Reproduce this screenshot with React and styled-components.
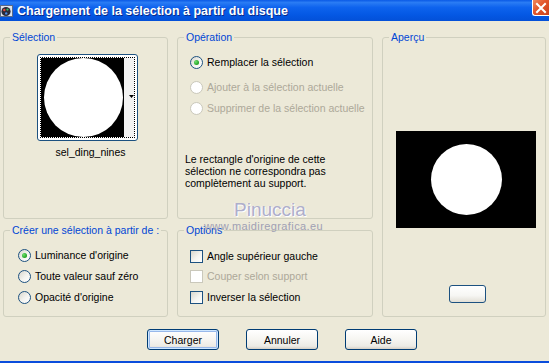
import React from "react";
import styled, { createGlobalStyle } from "styled-components";

const Global = createGlobalStyle`
  html, body { margin: 0; padding: 0; background: #ece9d8; }
  body { font-family: "Liberation Sans", Arial, sans-serif; font-size: 10.5px; color: #000; }
  * { box-sizing: border-box; }
`;

const Window = styled.div`
  position: relative;
  width: 549px;
  height: 363px;
  background: #ece9d8;
  border-bottom: 2px solid #0a4ddc;
  overflow: hidden;
  display: flex;
  flex-direction: column;
`;

const TitleBar = styled.div`
  height: 21px;
  flex: none;
  display: flex;
  align-items: center;
  background: linear-gradient(180deg, #0a5ae6 0%, #2a7cf4 12%, #0e63ee 35%, #0458e4 70%, #0350d8 100%);
`;

const AppIcon = styled.svg`
  width: 14px;
  height: 14px;
  margin: 0 3px 0 0;
  flex: none;
`;

const Title = styled.div`
  flex: 1;
  color: #fff;
  font-family: "Liberation Sans", Arial, sans-serif;
  font-weight: bold;
  font-size: 12.5px;
  text-shadow: 1px 1px 0 #0a2a8a;
  white-space: nowrap;
`;

const CloseBox = styled.div`
  align-self: flex-start;
  width: 17px;
  height: 17px;
  margin-top: -1px;
  border: 1px solid #fff;
  border-right: none;
  border-radius: 0 0 0 3px;
  background: linear-gradient(135deg, #f08a60 0%, #e2552a 45%, #c8401c 100%);
  display: flex;
  align-items: center;
  justify-content: center;
`;

const Body = styled.div`
  flex: 1;
  display: flex;
  flex-direction: column;
  padding: 10px 0 0 3px;
`;

const Groups = styled.div`
  display: grid;
  grid-template-columns: 165px 196px 164px;
  grid-template-rows: 188px 93px;
  column-gap: 9px;
  row-gap: 5px;
`;

const Group = styled.fieldset`
  margin: 0;
  padding: 0;
  min-width: 0;
  border: 1px solid #d0d0bf;
  border-radius: 3px;
  grid-column: ${(p) => p.$col};
  grid-row: ${(p) => p.$row};
  display: flex;
  flex-direction: column;
`;

const Legend = styled.legend`
  margin-left: 6px;
  padding: 0 2px;
  color: #0046d5;
  font-size: 10.5px;
  line-height: 13px;
  white-space: nowrap;
`;

const ThumbWrap = styled.div`
  display: flex;
  flex-direction: column;
  align-items: center;
  margin: 10px 0 0 33px;
  width: 101px;
`;

const ThumbButton = styled.div`
  width: 101px;
  height: 87px;
  border: 1px solid #1c5180;
  border-radius: 3px;
  background: #fff;
  padding: 2px;
`;

const FocusRect = styled.div`
  width: 100%;
  height: 100%;
  border: 1px dotted #000;
  display: flex;
`;

const ThumbLabel = styled.div`
  margin-top: 5px;
  padding-left: 6px;
  line-height: 13px;
  white-space: nowrap;
`;

const OptionList = styled.div`
  display: flex;
  flex-direction: column;
  padding: ${(p) => p.$pad};
`;

const Row = styled.label`
  display: flex;
  align-items: center;
  gap: 4px;
  height: 13px;
  line-height: 13px;
  margin-bottom: ${(p) => p.$mb || 0}px;
  color: ${(p) => (p.$disabled ? "#aca899" : "#000")};
  white-space: nowrap;
`;

const Radio = styled.span`
  width: 13px;
  height: 13px;
  flex: none;
  border-radius: 50%;
  border: 1px solid ${(p) => (p.$disabled ? "#cac8bb" : "#1c5180")};
  background: ${(p) => (p.$disabled ? "#fff" : "linear-gradient(135deg, #d8d6cc 0%, #f4f4f0 55%, #fff 100%)")};
  display: flex;
  align-items: center;
  justify-content: center;
  &::after {
    content: "";
    display: ${(p) => (p.$checked ? "block" : "none")};
    width: 5px;
    height: 5px;
    border-radius: 50%;
    background: radial-gradient(circle at 35% 35%, #6ee06e 0%, #21a121 70%, #1a8a1a 100%);
  }
`;

const Check = styled.span`
  width: 13px;
  height: 13px;
  flex: none;
  border: 1px solid ${(p) => (p.$disabled ? "#cac8bb" : "#1c5180")};
  background: ${(p) => (p.$disabled ? "#fff" : "linear-gradient(135deg, #d8d6cc 0%, #f4f4f0 55%, #fff 100%)")};
`;

const Note = styled.p`
  margin: 38px 0 0 7px;
  line-height: 12px;
`;

const PreviewBox = styled.svg`
  display: block;
  margin: 87px 0 0 13px;
  width: 140px;
  height: 97px;
`;

const SmallButton = styled.div`
  margin: 57px 0 0 66px;
  width: 37px;
  height: 18px;
  border: 1px solid #1c5180;
  border-radius: 3px;
  background: linear-gradient(180deg, #fff 0%, #f6f6f3 60%, #e2dfd6 100%);
`;

const ButtonRow = styled.div`
  display: flex;
  gap: 27px;
  margin: 12px 0 0 144px;
`;

const Button = styled.button`
  width: 72px;
  height: 21px;
  padding: 0;
  border: 1px solid #003c74;
  border-radius: 3px;
  font-family: "Liberation Sans", Arial, sans-serif;
  font-size: 10.5px;
  color: #000;
  background: linear-gradient(180deg, #ffffff 0%, #f6f5f1 50%, #ecebe5 85%, #d6d0c5 100%);
  box-shadow: ${(p) => (p.$default ? "inset 0 0 0 1px #cee7ff, inset 0 0 0 2px #98b8ea" : "none")};
`;

const Watermark = styled.div`
  position: absolute;
  left: 204px;
  top: 199px;
  display: flex;
  flex-direction: column;
  align-items: flex-start;
  pointer-events: none;
`;

const WmName = styled.div`
  margin-left: 30px;
  font-family: "Liberation Sans", Arial, sans-serif;
  font-size: 19px;
  line-height: 21px;
  color: #aeaeca;
  text-shadow: 1px 1px 0 #fff, -1px 0 0 #f4f4f8;
`;

const WmUrl = styled.div`
  font-family: "Liberation Sans", Arial, sans-serif;
  font-size: 11px;
  line-height: 12px;
  letter-spacing: 0.4px;
  color: #a0a0b4;
`;

export default function App() {
  return (
    <>
      <Global />
      <Window>
        <TitleBar>
          <AppIcon viewBox="0 0 14 14">
            <rect x="0.5" y="1.5" width="12" height="11" fill="#dfe4ec" stroke="#5a6a88" />
            <circle cx="6" cy="7.5" r="4.6" fill="#2a2a3a" />
            <circle cx="4.3" cy="6" r="1.2" fill="#e24a3a" />
            <circle cx="7.5" cy="5.6" r="1.1" fill="#3cc060" />
            <circle cx="6.2" cy="9.4" r="1.2" fill="#4a8ae8" />
          </AppIcon>
          <Title>Chargement de la sélection à partir du disque</Title>
          <CloseBox>
            <svg width="12" height="12" viewBox="0 0 12 12">
              <path d="M2 2 L10 10 M10 2 L2 10" stroke="#fff" strokeWidth="2" strokeLinecap="square" />
            </svg>
          </CloseBox>
        </TitleBar>
        <Body>
          <Groups>
            <Group $col="1" $row="1">
              <Legend>Sélection</Legend>
              <ThumbWrap>
                <ThumbButton>
                  <FocusRect>
                    <svg width="93" height="79" viewBox="0 0 93 79">
                      <rect x="0" y="0" width="83" height="79" fill="#000" />
                      <circle cx="42.5" cy="39.5" r="39.5" fill="#fff" />
                      <rect x="83" y="0" width="10" height="79" fill="#f2f2f2" />
                      <path d="M88 37 L93 37 L90.5 40 Z" fill="#000" />
                    </svg>
                  </FocusRect>
                </ThumbButton>
                <ThumbLabel>sel_ding_nines</ThumbLabel>
              </ThumbWrap>
            </Group>

            <Group $col="2" $row="1">
              <Legend>Opération</Legend>
              <OptionList $pad="12px 0 0 12px">
                <Row $mb={12}>
                  <Radio $checked />
                  Remplacer la sélection
                </Row>
                <Row $mb={8} $disabled>
                  <Radio $disabled />
                  Ajouter à la sélection actuelle
                </Row>
                <Row $disabled>
                  <Radio $disabled />
                  Supprimer de la sélection actuelle
                </Row>
              </OptionList>
              <Note>
                Le rectangle d'origine de cette
                <br />
                sélection ne correspondra pas
                <br />
                complètement au support.
              </Note>
            </Group>

            <Group $col="3" $row="1 / span 2">
              <Legend>Aperçu</Legend>
              <PreviewBox viewBox="0 0 140 97">
                <rect width="140" height="97" fill="#000" />
                <circle cx="70.5" cy="48.5" r="35.5" fill="#fff" />
              </PreviewBox>
              <SmallButton />
            </Group>

            <Group $col="1" $row="2">
              <Legend>Créer une sélection à partir de :</Legend>
              <OptionList $pad="12px 0 0 14px">
                <Row $mb={8}>
                  <Radio $checked />
                  Luminance d'origine
                </Row>
                <Row $mb={8}>
                  <Radio />
                  Toute valeur sauf zéro
                </Row>
                <Row>
                  <Radio />
                  Opacité d'origine
                </Row>
              </OptionList>
            </Group>

            <Group $col="2" $row="2">
              <Legend>Options</Legend>
              <OptionList $pad="13px 0 0 12px">
                <Row $mb={7}>
                  <Check />
                  Angle supérieur gauche
                </Row>
                <Row $mb={8} $disabled>
                  <Check $disabled />
                  Couper selon support
                </Row>
                <Row>
                  <Check />
                  Inverser la sélection
                </Row>
              </OptionList>
            </Group>
          </Groups>
          <ButtonRow>
            <Button $default>Charger</Button>
            <Button>Annuler</Button>
            <Button>Aide</Button>
          </ButtonRow>
        </Body>
        <Watermark>
          <WmName>Pinuccia</WmName>
          <WmUrl>www.maidiregrafica.eu</WmUrl>
        </Watermark>
      </Window>
    </>
  );
}
